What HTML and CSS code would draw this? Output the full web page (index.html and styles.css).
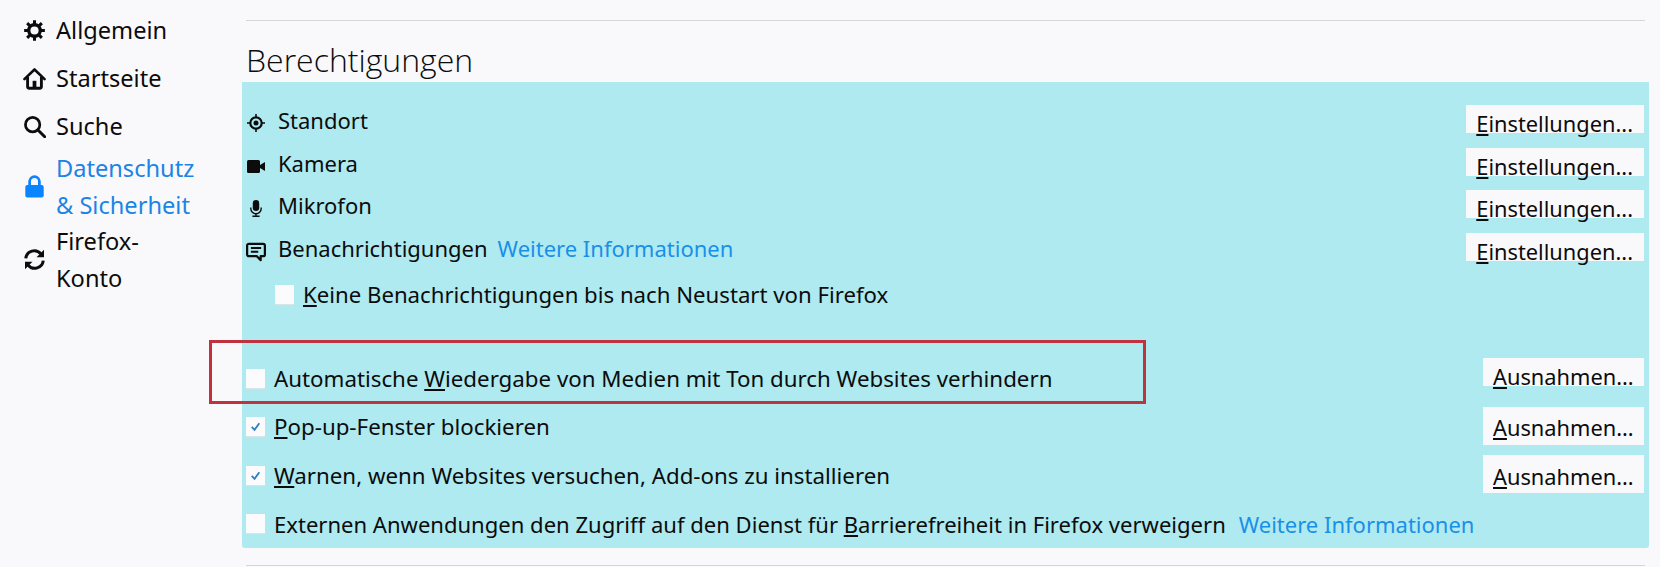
FILE: index.html
```html
<!DOCTYPE html>
<html lang="de">
<head>
  <meta charset="UTF-8">
  <title>Einstellungen</title>
  <link rel="stylesheet" href="styles.css">
</head>
<body>
  <nav class="sidebar">
    <a class="navItem">
      <svg class="navIcon" viewBox="0 0 16 16"><circle cx="8" cy="8" r="4" fill="none" stroke="currentColor" stroke-width="2.3"/><path d="M8 .8v3M8 12.2v3M.8 8h3M12.2 8h3M2.9 2.9l2.1 2.1M11 11l2.1 2.1M2.9 13.1L5 11M11 5l2.1-2.1" stroke="currentColor" stroke-width="2.1" fill="none"/></svg>
      <span>Allgemein</span>
    </a>
    <a class="navItem">
      <svg class="navIcon" viewBox="0 0 16 16"><path d="M1 8.4L8 1.7l7 6.7" fill="none" stroke="currentColor" stroke-width="1.8" stroke-linecap="round" stroke-linejoin="round"/><path d="M3.2 7v6.6c0 .7.5 1.2 1.2 1.2h7.2c.7 0 1.2-.5 1.2-1.2V7" fill="none" stroke="currentColor" stroke-width="2"/><rect x="6.7" y="9.6" width="2.6" height="5" fill="currentColor"/></svg>
      <span>Startseite</span>
    </a>
    <a class="navItem">
      <svg class="navIcon" viewBox="0 0 16 16"><circle cx="6.7" cy="6.7" r="5" fill="none" stroke="currentColor" stroke-width="1.9"/><path d="M10.4 10.4l4.7 4.7" stroke="currentColor" stroke-width="2.1" stroke-linecap="round"/></svg>
      <span>Suche</span>
    </a>
    <a class="navItem active">
      <svg class="navIcon lockIcon" viewBox="0 0 16 16"><rect x="1.6" y="7" width="12.8" height="8.6" rx="1.4" fill="#0a84ff"/><path d="M4.6 8V4.6a3.4 3.4 0 0 1 6.8 0V8" fill="none" stroke="#0a84ff" stroke-width="1.9"/></svg>
      <span>Datenschutz<br>&amp; Sicherheit</span>
    </a>
    <a class="navItem">
      <svg class="navIcon" viewBox="0 0 16 16"><path d="M1.9 7.2A6 6 0 0 1 12.4 4" fill="none" stroke="currentColor" stroke-width="2.1"/><path d="M14.6 1.2v5.2H9.4z" fill="currentColor"/><path d="M14.1 8.8A6 6 0 0 1 3.6 12" fill="none" stroke="currentColor" stroke-width="2.1"/><path d="M1.4 14.8V9.6h5.2z" fill="currentColor"/></svg>
      <span>Firefox-<br>Konto</span>
    </a>
  </nav>

  <main class="main">
    <h1 class="title">Berechtigungen</h1>
    <section class="panel">
      <div class="permRow">
        <div class="permLabel">
          <svg class="permIcon" viewBox="0 0 18 18"><circle cx="9" cy="9" r="5.7" fill="none" stroke="currentColor" stroke-width="2.2"/><circle cx="9" cy="9" r="2.5" fill="currentColor"/><path d="M9 0v3.4M9 14.6V18M0 9h3.4M14.6 9H18" stroke="currentColor" stroke-width="1.6"/></svg>
          <span>Standort</span>
        </div>
        <button class="btn"><u>E</u>instellungen...</button>
      </div>
      <div class="permRow">
        <div class="permLabel">
          <svg class="permIcon" viewBox="0 0 18 18"><rect x="0" y="3" width="13" height="13" rx="1.5" fill="currentColor"/><path d="M13 8l5-3v9l-5-3z" fill="currentColor"/></svg>
          <span>Kamera</span>
        </div>
        <button class="btn"><u>E</u>instellungen...</button>
      </div>
      <div class="permRow">
        <div class="permLabel">
          <svg class="permIcon" viewBox="0 0 18 18"><rect x="5.8" y="1" width="6.4" height="11" rx="3.2" fill="currentColor"/><path d="M3.8 8.6v1a5.2 5.2 0 0 0 10.4 0v-1M9 14.4v2.4M5.4 17.3h7.2" fill="none" stroke="currentColor" stroke-width="1.4"/></svg>
          <span>Mikrofon</span>
        </div>
        <button class="btn"><u>E</u>instellungen...</button>
      </div>
      <div class="permRow">
        <div class="permLabel">
          <svg class="permIcon bubbleIcon" viewBox="0 0 18 18"><path d="M2.6 1.6h12.8c.9 0 1.6.7 1.6 1.6v8c0 .9-.7 1.6-1.6 1.6h-2.2v3.6L9.8 12.8H2.6c-.9 0-1.6-.7-1.6-1.6v-8c0-.9.7-1.6 1.6-1.6z" fill="none" stroke="currentColor" stroke-width="2" stroke-linejoin="round"/><path d="M4.4 5.4h9.2M4.4 8.8h6.6" stroke="currentColor" stroke-width="1.7"/></svg>
          <span>Benachrichtigungen</span>
          <a class="link">Weitere Informationen</a>
        </div>
        <button class="btn"><u>E</u>instellungen...</button>
      </div>
      <label class="subRow">
        <span class="check"></span>
        <span><u>K</u>eine Benachrichtigungen bis nach Neustart von Firefox</span>
      </label>

      <div class="optRow">
        <label class="optLabel">
          <span class="check"></span>
          <span>Automatische <u>W</u>iedergabe von Medien mit Ton durch Websites verhindern</span>
        </label>
        <button class="btn btnExc"><u>A</u>usnahmen...</button>
      </div>
      <div class="optRow">
        <label class="optLabel">
          <span class="check"><svg viewBox="0 0 20 20"><path d="M6 10.5l3 3 5-7" fill="none" stroke="#2a7fc0" stroke-width="1.9"/></svg></span>
          <span><u>P</u>op-up-Fenster blockieren</span>
        </label>
        <button class="btn btnExc btnTall"><u>A</u>usnahmen...</button>
      </div>
      <div class="optRow">
        <label class="optLabel">
          <span class="check"><svg viewBox="0 0 20 20"><path d="M6 10.5l3 3 5-7" fill="none" stroke="#2a7fc0" stroke-width="1.9"/></svg></span>
          <span><u>W</u>arnen, wenn Websites versuchen, Add-ons zu installieren</span>
        </label>
        <button class="btn btnExc btnTall"><u>A</u>usnahmen...</button>
      </div>
      <div class="optRow optRowLong">
        <label class="optLabel">
          <span class="check"></span>
          <span>Externen Anwendungen den Zugriff auf den Dienst für <u>B</u>arrierefreiheit in Firefox verweigern</span>
          <a class="link linkLong">Weitere Informationen</a>
        </label>
      </div>

      <div class="redBox"></div>
    </section>
  </main>
</body>
</html>
```

FILE: styles.css
```css
html, body {
  padding: 0;
  margin: 0;
  font-family: 'Noto Sans', 'Open Sans', sans-serif;
  font-size: 22px;
  background-color: #f9f9fb;
  color: #0c0c0d;
}

body {
  display: flex;
  height: 567px;
  overflow: hidden;
}

.sidebar {
  width: 242px;
  flex-shrink: 0;
  padding-top: 6px;
  box-sizing: border-box;
  font-size: 23.6px;
}

.navItem {
  display: flex;
  align-items: center;
  min-height: 48px;
  line-height: 36.5px;
  padding-left: 23px;
}

.navIcon {
  width: 23px;
  height: 23px;
  margin-right: 10px;
  flex-shrink: 0;
}

.active {
  color: #1b84e6;
}

.main {
  flex: 1;
  padding: 20px 11px 0 0;
  min-width: 0;
}

.title {
  margin: 0 4px;
  height: 61px;
  line-height: 78px;
  font-family: 'Open Sans', sans-serif;
  font-size: 32px;
  font-weight: 300;
  border-top: 1px solid #d7d7db;
  box-sizing: border-box;
}

.panel {
  position: relative;
  height: 466px;
  padding: 23px 5px 0 5px;
  box-sizing: border-box;
  background-color: #aeeaf0;
  border-radius: 0 0 3px 3px;
  margin-top: 1px;
}

.panel::after {
  content: "";
  position: absolute;
  left: 4px;
  right: 4px;
  top: 483px;
  border-top: 1px solid #d7d7db;
}

.permRow {
  display: flex;
  justify-content: space-between;
  align-items: flex-start;
  height: 42.5px;
}

.permLabel {
  display: flex;
  align-items: flex-start;
  line-height: 30px;
}

.permIcon {
  width: 18px;
  height: 18px;
  margin: 9px 13px 0 0;
  flex-shrink: 0;
}

.bubbleIcon {
  width: 20px;
  height: 20px;
  margin: 9px 12px 0 -1px;
}

.link {
  color: #1a8fe8;
  font-size: 22px;
  margin-left: 10px;
}

.linkLong {
  margin-left: 13px;
}

.btn {
  display: block;
  height: 28px;
  padding: 5px 11px 0 10px;
  margin: 0;
  border: none;
  box-sizing: border-box;
  background-color: #f9f9fb;
  color: #0c0c0d;
  font: inherit;
  font-size: 21.8px;
  line-height: 28px;
  text-align: left;
  white-space: nowrap;
}

.btnExc {
  width: 161px;
}

.btnTall {
  height: 38px;
}

.check {
  display: block;
  width: 19px;
  height: 19px;
  margin-right: 9px;
  flex-shrink: 0;
  background-color: #fbfbfd;
  box-shadow: 0 1px 0 #d7e4e8;
}

.check svg {
  display: block;
  width: 19px;
  height: 19px;
}

.subRow {
  display: flex;
  align-items: center;
  height: 38px;
  margin: 0 0 45px 28px;
  font-size: 22.2px;
}

.optRow {
  display: flex;
  justify-content: space-between;
  align-items: flex-start;
  height: 48.5px;
  font-size: 22.3px;
}

.optRowLong {
  font-size: 22.05px;
}

.optLabel {
  display: flex;
  align-items: center;
  height: 40px;
  margin-left: -1px;
}

.redBox {
  position: absolute;
  left: -33px;
  top: 258px;
  width: 937px;
  height: 64px;
  box-sizing: border-box;
  border: 3px solid #c1323f;
}
```
